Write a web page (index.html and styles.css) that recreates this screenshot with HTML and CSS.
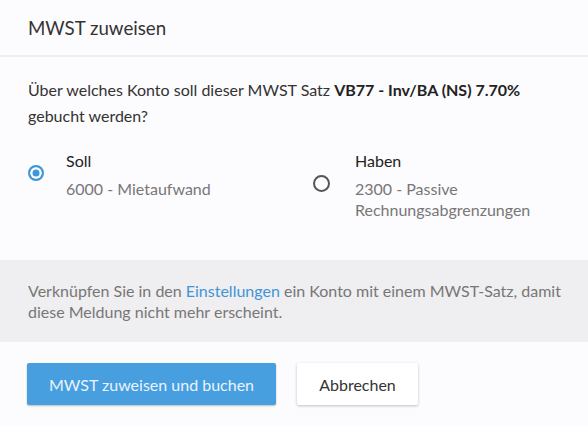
FILE: index.html
```html
<!DOCTYPE html>
<html lang="de">
<head>
  <meta charset="UTF-8" />
  <meta name="viewport" content="width=device-width, initial-scale=1" />
  <title>MWST zuweisen</title>
  <link rel="stylesheet" href="styles.css">
</head>
<body>
  <div class="dialog">
    <header class="dialog-kopf">
      <h1>MWST zuweisen</h1>
    </header>

    <div class="dialog-inhalt">
      <p class="frage">Über welches Konto soll dieser MWST Satz <b>VB77 - Inv/BA (NS) 7.70%</b> gebucht werden?</p>

      <div class="optionen">
        <label class="option option-soll">
          <span class="radio aktiv"></span>
          <span class="option-text">
            <span class="option-titel">Soll</span>
            <span class="option-konto">6000 - Mietaufwand</span>
          </span>
        </label>
        <label class="option option-haben">
          <span class="radio"></span>
          <span class="option-text">
            <span class="option-titel">Haben</span>
            <span class="option-konto">2300 - Passive Rechnungsabgrenzungen</span>
          </span>
        </label>
      </div>
    </div>

    <div class="hinweis">
      Verknüpfen Sie in den <a href="#">Einstellungen</a> ein Konto mit einem MWST-Satz, damit diese Meldung nicht mehr erscheint.
    </div>

    <div class="aktionen">
      <button class="btn btn-primaer">MWST zuweisen und buchen</button>
      <button class="btn btn-abbrechen">Abbrechen</button>
    </div>
  </div>
</body>
</html>
```

FILE: styles.css
```css
body {
  font-family: Lato, 'Open Sans', sans-serif;
  background: #fcfbfd;
  margin: 0;
  padding: 0;
  color: #333;
}
.dialog-kopf {
  height: 55px;
  border-bottom: 2px solid #efeef0;
  padding: 0 28px;
  display: flex;
  align-items: center;
}
.dialog-kopf h1 {
  font-size: 18.7px;
  font-weight: normal;
  margin: 0;
  color: #333;
}
.dialog-inhalt {
  padding: 20px 28px 0;
  height: 203px;
  box-sizing: border-box;
}
.frage {
  font-size: 16px;
  line-height: 26px;
  margin: 0;
  color: #333;
}
.frage b {
  font-weight: bold;
  color: #222;
}
.optionen {
  display: flex;
  margin-top: 21px;
}
.option {
  display: flex;
  align-items: flex-start;
}
.option-soll {
  width: 285px;
  flex-shrink: 0;
}
.option-haben {
  width: 230px;
  flex-shrink: 0;
}
.radio {
  width: 13px;
  height: 13px;
  border: 2px solid #555;
  border-radius: 50%;
  margin-top: 25px;
  margin-right: 25px;
  flex-shrink: 0;
}
.radio.aktiv {
  border: 2.5px solid #3d97db;
  background: #3d97db;
  box-shadow: inset 0 0 0 2.5px #fcfbfd;
  width: 12px;
  height: 12px;
  margin-top: 15px;
  margin-right: 22px;
}
.option-text {
  display: flex;
  flex-direction: column;
}
.option-titel {
  font-size: 16px;
  line-height: 22px;
  color: #222;
}
.option-konto {
  font-size: 16px;
  line-height: 21px;
  margin-top: 6px;
  color: #777;
}
.hinweis {
  background: #efeef0;
  padding: 20px 10px 20px 28px;
  font-size: 16px;
  line-height: 21px;
  color: #777;
}
.hinweis a {
  color: #3f95d6;
  text-decoration: none;
}
.aktionen {
  display: flex;
  gap: 21px;
  padding: 21px 27px;
}
.btn {
  font-family: inherit;
  font-size: 16px;
  height: 42px;
  border: none;
  border-radius: 2px;
  cursor: pointer;
}
.btn-primaer {
  width: 249px;
  background: #479fe0;
  color: #eaf3fb;
  box-shadow: 0 1px 2px rgba(0, 0, 0, 0.25);
}
.btn-abbrechen {
  width: 121px;
  background: #ffffff;
  color: #333;
  box-shadow: 0 1px 3px rgba(0, 0, 0, 0.25);
}
```
